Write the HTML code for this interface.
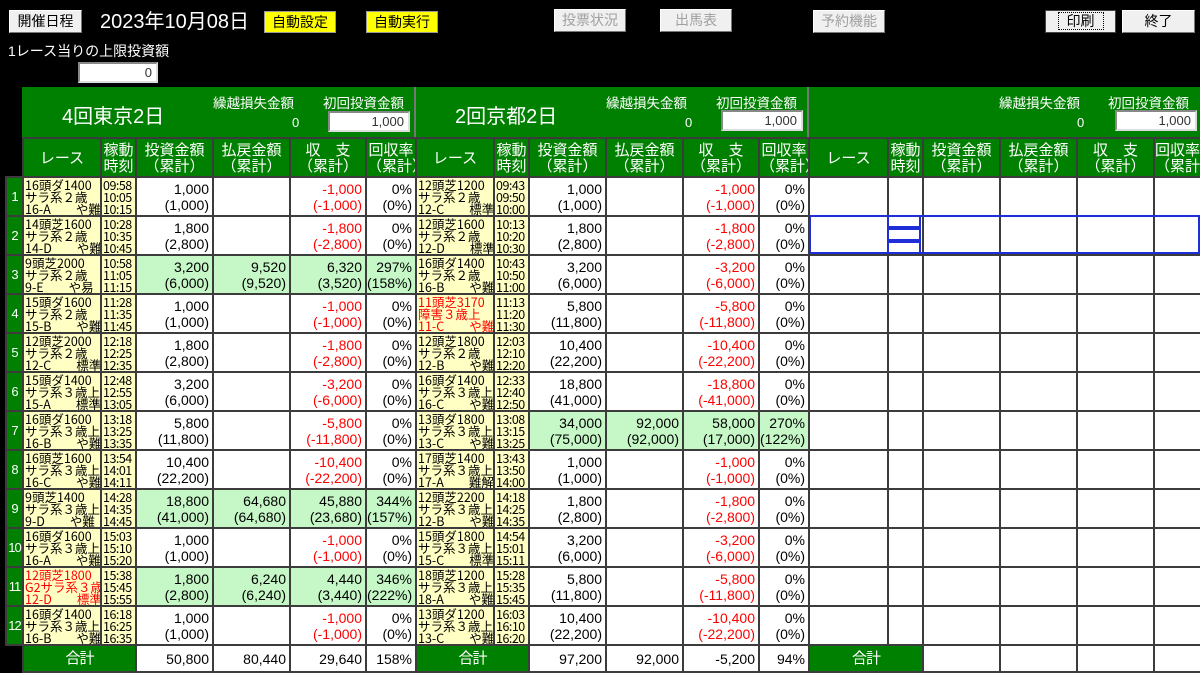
<!DOCTYPE html>
<html><head><meta charset="utf-8"><style>
*{box-sizing:border-box}
body{margin:0;width:1200px;height:671px;overflow:hidden;background:#000;font-family:"Liberation Sans","Noto Sans CJK JP",sans-serif;position:relative;color:#000}
.a{position:absolute}
.btn{position:absolute;background:#f0f0f0;border:1px solid #fff;border-right-color:#777;border-bottom-color:#777;font-size:14px;text-align:center;line-height:21px;height:23px}
.dis{color:#a0a0a0}
.yel{position:absolute;background:#ffff00;font-size:14px;text-align:center;line-height:20px;height:22px;border:1px solid #999}
.w{color:#fff}
.inp{position:absolute;background:#fff;border:2px solid #888;border-right-color:#ddd;border-bottom-color:#ddd;text-align:right;font-size:13px;padding-right:4px;line-height:17px;color:#333}
.hdr{position:absolute;left:22px;top:87px;width:1178px;height:50px;background:#008000}
.sep{position:absolute;top:87px;width:2px;height:50px;background:#777}
table{position:absolute;left:5px;top:137px;width:1195px;border-collapse:collapse;table-layout:fixed}
td,th{border:2px solid #3c3c3c;padding:0;font-weight:normal;overflow:hidden;white-space:nowrap}
tr{height:39px}
td{background:#fff;text-align:right;font-size:14px;line-height:16px;padding-right:3px}
th{background:#008000;color:#fff;font-size:14px;line-height:16px}
tbody th{font-size:13px;letter-spacing:-1px}
thead th{font-size:15px;line-height:16px;font-family:"Noto Sans CJK JP",sans-serif}
thead th.x{background:#000;border:none}
td.r,td.t{background:#ffffc4;text-align:left;font-family:"Noto Sans CJK JP",sans-serif;font-size:12.5px;line-height:12px;padding:0 0 0 1px;letter-spacing:0}
td.t{letter-spacing:-0.5px}
.m{color:#f00}
tr.g td.n{background:#c6f7c6}
td.rr{color:#f00}
tr.tot{height:27px}
tr.tot th.x{background:#000;border:none}
tr.tot th.s{font-size:15px}
tr.tot td{font-size:14px}
</style></head><body>
<div class="btn" style="left:9px;top:10px;width:73px">開催日程</div>
<div class="a w" style="left:100px;top:8px;font-size:20px;line-height:28px">2023年10月08日</div>
<div class="yel" style="left:264px;top:11px;width:72px">自動設定</div>
<div class="yel" style="left:366px;top:11px;width:72px">自動実行</div>
<div class="btn dis" style="left:554px;top:9px;width:72px">投票状況</div>
<div class="btn dis" style="left:660px;top:9px;width:72px">出馬表</div>
<div class="btn dis" style="left:813px;top:10px;width:72px">予約機能</div>
<div class="btn" style="left:1045px;top:10px;width:71px;border:1px solid #444"><span style="border:1px dotted #000;padding:0 8px">印刷</span></div>
<div class="btn" style="left:1122px;top:10px;width:73px">終了</div>
<div class="a w" style="left:8px;top:42px;font-size:14px;line-height:18px">1レース当りの上限投資額</div>
<div class="inp" style="left:78px;top:62px;width:80px;height:21px">0</div>

<div class="hdr"></div>
<div class="sep" style="left:414px"></div>
<div class="sep" style="left:807px"></div>
<div class="a w" style="left:62px;top:100px;font-size:20px">4回東京2日</div>
<div class="a w" style="left:213px;top:92px;font-size:13.5px">繰越損失金額</div>
<div class="a w" style="left:292px;top:115px;font-size:13px">0</div>
<div class="a w" style="left:323px;top:92px;font-size:13.5px">初回投資金額</div>
<div class="inp" style="left:328px;top:111px;width:82px;height:21px">1,000</div>
<div class="a w" style="left:455px;top:100px;font-size:20px">2回京都2日</div>
<div class="a w" style="left:606px;top:92px;font-size:13.5px">繰越損失金額</div>
<div class="a w" style="left:685px;top:115px;font-size:13px">0</div>
<div class="a w" style="left:716px;top:92px;font-size:13.5px">初回投資金額</div>
<div class="inp" style="left:721px;top:110px;width:82px;height:21px">1,000</div>
<div class="a w" style="left:999px;top:92px;font-size:13.5px">繰越損失金額</div>
<div class="a w" style="left:1077px;top:115px;font-size:13px">0</div>
<div class="a w" style="left:1108px;top:92px;font-size:13.5px">初回投資金額</div>
<div class="inp" style="left:1115px;top:110px;width:82px;height:21px">1,000</div>

<table>
<colgroup><col style="width:17px">
<col style="width:78px"><col style="width:35px"><col style="width:77px"><col style="width:77px"><col style="width:76px"><col style="width:50px">
<col style="width:78px"><col style="width:35px"><col style="width:77px"><col style="width:77px"><col style="width:76px"><col style="width:50px">
<col style="width:79px"><col style="width:35px"><col style="width:77px"><col style="width:77px"><col style="width:77px"><col style="width:47px">
</colgroup>
<thead><tr><th class="x"></th>
<th>レース</th><th>稼動<br>時刻</th><th>投資金額<br>（累計）</th><th>払戻金額<br>（累計）</th><th>収　支<br>（累計）</th><th>回収率<br>（累計）</th>
<th>レース</th><th>稼動<br>時刻</th><th>投資金額<br>（累計）</th><th>払戻金額<br>（累計）</th><th>収　支<br>（累計）</th><th>回収率<br>（累計）</th>
<th>レース</th><th>稼動<br>時刻</th><th>投資金額<br>（累計）</th><th>払戻金額<br>（累計）</th><th>収　支<br>（累計）</th><th>回収率<br>（累計）</th>
</tr></thead>
<tbody>
<tr><th>1</th><td class="r">16頭ダ1400<br>サラ系２歳<br>16-A　　や難</td><td class="t">09:58<br>10:05<br>10:15</td><td>1,000<br>(1,000)</td><td></td><td class="m">-1,000<br>(-1,000)</td><td>0%<br>(0%)</td>
<td class="r">12頭芝1200<br>サラ系２歳<br>12-C　　標準</td><td class="t">09:43<br>09:50<br>10:00</td><td>1,000<br>(1,000)</td><td></td><td class="m">-1,000<br>(-1,000)</td><td>0%<br>(0%)</td>
<td></td><td></td><td></td><td></td><td></td><td></td></tr>
<tr><th>2</th><td class="r">14頭芝1600<br>サラ系２歳<br>14-D　　や難</td><td class="t">10:28<br>10:35<br>10:45</td><td>1,800<br>(2,800)</td><td></td><td class="m">-1,800<br>(-2,800)</td><td>0%<br>(0%)</td>
<td class="r">12頭芝1600<br>サラ系２歳<br>12-D　　標準</td><td class="t">10:13<br>10:20<br>10:30</td><td>1,800<br>(2,800)</td><td></td><td class="m">-1,800<br>(-2,800)</td><td>0%<br>(0%)</td>
<td></td><td></td><td></td><td></td><td></td><td></td></tr>
<tr class="g"><th>3</th><td class="r">9頭芝2000<br>サラ系２歳<br>9-E　　や易</td><td class="t">10:58<br>11:05<br>11:15</td><td class="n">3,200<br>(6,000)</td><td class="n">9,520<br>(9,520)</td><td class="n">6,320<br>(3,520)</td><td class="n">297%<br>(158%)</td>
<td class="r">16頭ダ1400<br>サラ系２歳<br>16-B　　や難</td><td class="t">10:43<br>10:50<br>11:00</td><td>3,200<br>(6,000)</td><td></td><td class="m">-3,200<br>(-6,000)</td><td>0%<br>(0%)</td>
<td></td><td></td><td></td><td></td><td></td><td></td></tr>
<tr><th>4</th><td class="r">15頭ダ1600<br>サラ系２歳<br>15-B　　や難</td><td class="t">11:28<br>11:35<br>11:45</td><td>1,000<br>(1,000)</td><td></td><td class="m">-1,000<br>(-1,000)</td><td>0%<br>(0%)</td>
<td class="r rr">11頭芝3170<br>障害３歳上<br>11-C　　や難</td><td class="t">11:13<br>11:20<br>11:30</td><td>5,800<br>(11,800)</td><td></td><td class="m">-5,800<br>(-11,800)</td><td>0%<br>(0%)</td>
<td></td><td></td><td></td><td></td><td></td><td></td></tr>
<tr><th>5</th><td class="r">12頭芝2000<br>サラ系２歳<br>12-C　　標準</td><td class="t">12:18<br>12:25<br>12:35</td><td>1,800<br>(2,800)</td><td></td><td class="m">-1,800<br>(-2,800)</td><td>0%<br>(0%)</td>
<td class="r">12頭芝1800<br>サラ系２歳<br>12-B　　や難</td><td class="t">12:03<br>12:10<br>12:20</td><td>10,400<br>(22,200)</td><td></td><td class="m">-10,400<br>(-22,200)</td><td>0%<br>(0%)</td>
<td></td><td></td><td></td><td></td><td></td><td></td></tr>
<tr><th>6</th><td class="r">15頭ダ1400<br>サラ系３歳上<br>15-A　　標準</td><td class="t">12:48<br>12:55<br>13:05</td><td>3,200<br>(6,000)</td><td></td><td class="m">-3,200<br>(-6,000)</td><td>0%<br>(0%)</td>
<td class="r">16頭ダ1400<br>サラ系３歳上<br>16-C　　や難</td><td class="t">12:33<br>12:40<br>12:50</td><td>18,800<br>(41,000)</td><td></td><td class="m">-18,800<br>(-41,000)</td><td>0%<br>(0%)</td>
<td></td><td></td><td></td><td></td><td></td><td></td></tr>
<tr class="g"><th>7</th><td class="r">16頭ダ1600<br>サラ系３歳上<br>16-B　　や難</td><td class="t">13:18<br>13:25<br>13:35</td><td>5,800<br>(11,800)</td><td></td><td class="m">-5,800<br>(-11,800)</td><td>0%<br>(0%)</td>
<td class="r">13頭ダ1800<br>サラ系３歳上<br>13-C　　や難</td><td class="t">13:08<br>13:15<br>13:25</td><td class="n">34,000<br>(75,000)</td><td class="n">92,000<br>(92,000)</td><td class="n">58,000<br>(17,000)</td><td class="n">270%<br>(122%)</td>
<td></td><td></td><td></td><td></td><td></td><td></td></tr>
<tr><th>8</th><td class="r">16頭芝1600<br>サラ系３歳上<br>16-C　　や難</td><td class="t">13:54<br>14:01<br>14:11</td><td>10,400<br>(22,200)</td><td></td><td class="m">-10,400<br>(-22,200)</td><td>0%<br>(0%)</td>
<td class="r">17頭芝1400<br>サラ系３歳上<br>17-A　　難解</td><td class="t">13:43<br>13:50<br>14:00</td><td>1,000<br>(1,000)</td><td></td><td class="m">-1,000<br>(-1,000)</td><td>0%<br>(0%)</td>
<td></td><td></td><td></td><td></td><td></td><td></td></tr>
<tr class="g"><th>9</th><td class="r">9頭芝1400<br>サラ系３歳上<br>9-D　　や難</td><td class="t">14:28<br>14:35<br>14:45</td><td class="n">18,800<br>(41,000)</td><td class="n">64,680<br>(64,680)</td><td class="n">45,880<br>(23,680)</td><td class="n">344%<br>(157%)</td>
<td class="r">12頭芝2200<br>サラ系３歳上<br>12-B　　や難</td><td class="t">14:18<br>14:25<br>14:35</td><td>1,800<br>(2,800)</td><td></td><td class="m">-1,800<br>(-2,800)</td><td>0%<br>(0%)</td>
<td></td><td></td><td></td><td></td><td></td><td></td></tr>
<tr><th>10</th><td class="r">16頭ダ1600<br>サラ系３歳上<br>16-A　　や難</td><td class="t">15:03<br>15:10<br>15:20</td><td>1,000<br>(1,000)</td><td></td><td class="m">-1,000<br>(-1,000)</td><td>0%<br>(0%)</td>
<td class="r">15頭ダ1800<br>サラ系３歳上<br>15-C　　標準</td><td class="t">14:54<br>15:01<br>15:11</td><td>3,200<br>(6,000)</td><td></td><td class="m">-3,200<br>(-6,000)</td><td>0%<br>(0%)</td>
<td></td><td></td><td></td><td></td><td></td><td></td></tr>
<tr class="g"><th>11</th><td class="r rr">12頭芝1800<br>G2サラ系３歳<br>12-D　　標準</td><td class="t">15:38<br>15:45<br>15:55</td><td class="n">1,800<br>(2,800)</td><td class="n">6,240<br>(6,240)</td><td class="n">4,440<br>(3,440)</td><td class="n">346%<br>(222%)</td>
<td class="r">18頭芝1200<br>サラ系３歳上<br>18-A　　や難</td><td class="t">15:28<br>15:35<br>15:45</td><td>5,800<br>(11,800)</td><td></td><td class="m">-5,800<br>(-11,800)</td><td>0%<br>(0%)</td>
<td></td><td></td><td></td><td></td><td></td><td></td></tr>
<tr><th>12</th><td class="r">16頭ダ1400<br>サラ系３歳上<br>16-B　　や難</td><td class="t">16:18<br>16:25<br>16:35</td><td>1,000<br>(1,000)</td><td></td><td class="m">-1,000<br>(-1,000)</td><td>0%<br>(0%)</td>
<td class="r">13頭ダ1200<br>サラ系３歳上<br>13-C　　や難</td><td class="t">16:03<br>16:10<br>16:20</td><td>10,400<br>(22,200)</td><td></td><td class="m">-10,400<br>(-22,200)</td><td>0%<br>(0%)</td>
<td></td><td></td><td></td><td></td><td></td><td></td></tr>
<tr class="tot"><th class="x"></th>
<th class="s" colspan="2">合計</th><td>50,800</td><td>80,440</td><td>29,640</td><td>158%</td>
<th class="s" colspan="2">合計</th><td>97,200</td><td>92,000</td><td>-5,200</td><td>94%</td>
<th class="s" colspan="2">合計</th><td></td><td></td><td></td><td></td>
</tr>
</tbody></table>
<div class="a" style="left:809px;top:215px;width:391px;height:39px;border:2px solid #1f2fd8"></div>
<div class="a" style="left:887px;top:215px;width:34px;height:13px;border:2px solid #1f2fd8"></div>
<div class="a" style="left:887px;top:228px;width:34px;height:13px;border:2px solid #1f2fd8"></div>
<div class="a" style="left:887px;top:241px;width:34px;height:13px;border:2px solid #1f2fd8"></div>
</body></html>
